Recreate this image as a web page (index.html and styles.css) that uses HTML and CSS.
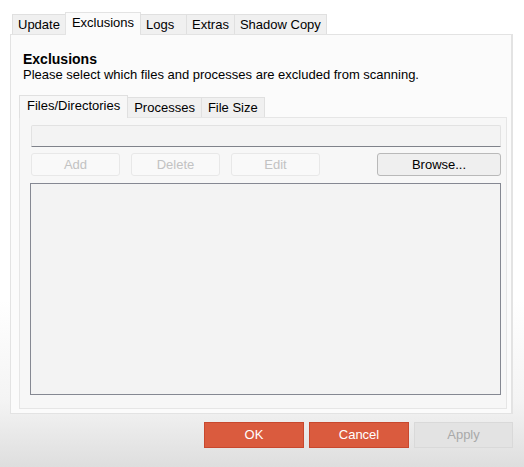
FILE: index.html
```html
<!DOCTYPE html>
<html>
<head>
<meta charset="utf-8">
<link rel="stylesheet" href="styles.css">
</head>
<body>
<div class="window">
  <div class="tabs">
    <div class="tab">Update</div>
    <div class="tab active">Exclusions</div>
    <div class="tab w-logs">Logs</div>
    <div class="tab">Extras</div>
    <div class="tab">Shadow Copy</div>
  </div>
  <div class="panel">
    <div class="head">
      <div class="title">Exclusions</div>
      <div class="desc">Please select which files and processes are excluded from scanning.</div>
    </div>
    <div class="subtabs">
      <div class="subtab active">Files/Directories</div>
      <div class="subtab">Processes</div>
      <div class="subtab">File Size</div>
    </div>
    <div class="subpanel">
      <div class="input"></div>
      <div class="btnrow">
        <div class="btn disabled">Add</div>
        <div class="btn disabled">Delete</div>
        <div class="btn disabled">Edit</div>
        <div class="btn browse">Browse...</div>
      </div>
      <div class="list"></div>
    </div>
  </div>
  <div class="footer">
    <div class="fbtn primary">OK</div>
    <div class="fbtn primary">Cancel</div>
    <div class="fbtn off">Apply</div>
  </div>
</div>
</body>
</html>
```
FILE: styles.css
```css
html, body {
  margin: 0;
  padding: 0;
  height: 467px;
  overflow: hidden;
}
body {
  font-family: "Liberation Sans", Arial, sans-serif;
  font-size: 13px;
  color: #000;
  background: linear-gradient(to bottom, #ffffff 0px, #ffffff 300px, #f4f4f4 400px, #dedede 467px);
}
.window {
  padding: 12px 11px 0 10px;
}
.tabs {
  display: flex;
  align-items: flex-end;
  margin-left: 2px;
  height: 22px;
  position: relative;
  z-index: 2;
}
.tab {
  box-sizing: border-box;
  height: 20px;
  padding: 0 5px;
  line-height: 20px;
  background: #f0f0f0;
  border: 1px solid #e0e0e0;
  border-bottom: none;
  margin-right: -1px;
}
.tab.w-logs {
  width: 47px;
}
.tab.active {
  height: 23px;
  line-height: 19px;
  background: #fbfbfb;
  border-color: #e3e3e3;
  padding: 0 6px;
  margin-bottom: -1px;
}
.panel {
  box-sizing: border-box;
  height: 380px;
  background: #fbfbfb;
  border: 1px solid #e3e3e3;
  border-right-width: 2px;
  padding: 0 4px 4px 8px;
  display: flex;
  flex-direction: column;
}
.head {
  padding: 16px 0 0 4px;
}
.title {
  font-weight: bold;
  font-size: 14px;
  line-height: 16px;
}
.desc {
  line-height: 16px;
}
.subtabs {
  display: flex;
  align-items: flex-end;
  margin-top: 11px;
  height: 23px;
  position: relative;
  z-index: 2;
}
.subtab {
  box-sizing: border-box;
  height: 20px;
  padding: 0 6px;
  line-height: 20px;
  background: #f0f0f0;
  border: 1px solid #e0e0e0;
  border-bottom: none;
  margin-right: -1px;
}
.subtab.active {
  height: 23px;
  line-height: 20px;
  background: #f7f7f7;
  padding: 0 7px;
  margin-bottom: -1px;
}
.subpanel {
  flex: 1;
  box-sizing: border-box;
  background: #f7f7f7;
  border: 1px solid #e6e6e6;
  padding: 7px 5px 13px 11px;
  display: flex;
  flex-direction: column;
}
.input {
  box-sizing: border-box;
  height: 22px;
  background: #f3f3f3;
  border: 1px solid #e2e2e2;
  border-bottom: 1px solid #7f828a;
  border-radius: 2px 2px 0 0;
}
.btnrow {
  display: flex;
  gap: 11px;
  margin-top: 6px;
}
.btn {
  box-sizing: border-box;
  width: 89px;
  height: 23px;
  line-height: 21px;
  text-align: center;
  border-radius: 3px;
}
.btn.disabled {
  background: #f9f9f9;
  border: 1px solid #e8e8e8;
  color: #c2c2c2;
}
.btn.browse {
  width: 124px;
  margin-left: auto;
  background: #efefef;
  border: 1px solid #b9b9b9;
}
.list {
  flex: 1;
  margin-top: 7px;
  margin-left: -1px;
  background: #f3f3f3;
  border: 1px solid #858892;
}
.footer {
  display: flex;
  justify-content: flex-end;
  gap: 5px;
  margin-top: 8px;
}
.fbtn {
  box-sizing: border-box;
  width: 100px;
  height: 26px;
  line-height: 24px;
  text-align: center;
}
.fbtn.primary {
  background: #da5b3e;
  border: 1px solid #c8482e;
  color: #fff;
}
.fbtn.off {
  width: 99px;
  background: #e3e3e3;
  border: 1px solid #d9d9d9;
  color: #a9a9a9;
}
```
